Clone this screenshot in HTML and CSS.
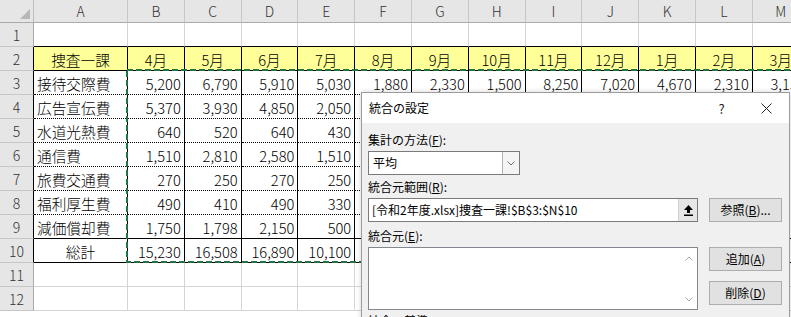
FILE: index.html
```html
<!DOCTYPE html>
<html lang="ja">
<head>
<meta charset="utf-8">
<title>統合の設定</title>
<link rel="stylesheet" href="styles.css">
</head>
<body>
<div class="sheet">
  <div class="grid">
    <div class="corner"><svg width="10" height="10" viewBox="0 0 10 10"><path d="M10 0V10H0Z" fill="#b7b7b7"/></svg></div>
    <div class="ch">A</div><div class="ch">B</div><div class="ch">C</div><div class="ch">D</div><div class="ch">E</div><div class="ch">F</div><div class="ch">G</div><div class="ch">H</div><div class="ch">I</div><div class="ch">J</div><div class="ch">K</div><div class="ch">L</div><div class="ch">M</div>

    <div class="rh">1</div>
    <div class="tb"></div><div class="tb"></div><div class="tb"></div><div class="tb"></div><div class="tb"></div><div class="tb"></div><div class="tb"></div><div class="tb"></div><div class="tb"></div><div class="tb"></div><div class="tb"></div><div class="tb"></div><div class="tb"></div>

    <div class="rh rb">2</div>
    <div class="y t tb ctr">捜査一課</div><div class="y t tb ctr">4月</div><div class="y t tb ctr">5月</div><div class="y t tb ctr">6月</div><div class="y t tb ctr">7月</div><div class="y t tb ctr">8月</div><div class="y t tb ctr">9月</div><div class="y t tb ctr">10月</div><div class="y t tb ctr">11月</div><div class="y t tb ctr">12月</div><div class="y t tb ctr">1月</div><div class="y t tb ctr">2月</div><div class="y t tb ctr">3月</div>

    <div class="rh rb">3</div>
    <div class="t td">接待交際費</div><div class="t td n">5,200</div><div class="t td n">6,790</div><div class="t td n">5,910</div><div class="t td n">5,030</div><div class="t td n">1,880</div><div class="t td n">2,330</div><div class="t td n">1,500</div><div class="t td n">8,250</div><div class="t td n">7,020</div><div class="t td n">4,670</div><div class="t td n">2,310</div><div class="t td n">3,150</div>

    <div class="rh rb">4</div>
    <div class="t td">広告宣伝費</div><div class="t td n">5,370</div><div class="t td n">3,930</div><div class="t td n">4,850</div><div class="t td n">2,050</div><div class="t td"></div><div class="t td"></div><div class="t td"></div><div class="t td"></div><div class="t td"></div><div class="t td"></div><div class="t td"></div><div class="t td"></div>

    <div class="rh rb">5</div>
    <div class="t td">水道光熱費</div><div class="t td n">640</div><div class="t td n">520</div><div class="t td n">640</div><div class="t td n">430</div><div class="t td"></div><div class="t td"></div><div class="t td"></div><div class="t td"></div><div class="t td"></div><div class="t td"></div><div class="t td"></div><div class="t td"></div>

    <div class="rh rb">6</div>
    <div class="t td">通信費</div><div class="t td n">1,510</div><div class="t td n">2,810</div><div class="t td n">2,580</div><div class="t td n">1,510</div><div class="t td"></div><div class="t td"></div><div class="t td"></div><div class="t td"></div><div class="t td"></div><div class="t td"></div><div class="t td"></div><div class="t td"></div>

    <div class="rh rb">7</div>
    <div class="t td">旅費交通費</div><div class="t td n">270</div><div class="t td n">250</div><div class="t td n">270</div><div class="t td n">250</div><div class="t td"></div><div class="t td"></div><div class="t td"></div><div class="t td"></div><div class="t td"></div><div class="t td"></div><div class="t td"></div><div class="t td"></div>

    <div class="rh rb">8</div>
    <div class="t td">福利厚生費</div><div class="t td n">490</div><div class="t td n">410</div><div class="t td n">490</div><div class="t td n">330</div><div class="t td"></div><div class="t td"></div><div class="t td"></div><div class="t td"></div><div class="t td"></div><div class="t td"></div><div class="t td"></div><div class="t td"></div>

    <div class="rh rb">9</div>
    <div class="t tb">減価償却費</div><div class="t tb n">1,750</div><div class="t tb n">1,798</div><div class="t tb n">2,150</div><div class="t tb n">500</div><div class="t tb"></div><div class="t tb"></div><div class="t tb"></div><div class="t tb"></div><div class="t tb"></div><div class="t tb"></div><div class="t tb"></div><div class="t tb"></div>

    <div class="rh rb">10</div>
    <div class="t tb ctr">総計</div><div class="t tb n">15,230</div><div class="t tb n">16,508</div><div class="t tb n">16,890</div><div class="t tb n">10,100</div><div class="t tb"></div><div class="t tb"></div><div class="t tb"></div><div class="t tb"></div><div class="t tb"></div><div class="t tb"></div><div class="t tb"></div><div class="t tb"></div>

    <div class="rh">11</div>
    <div></div><div></div><div></div><div></div><div></div><div></div><div></div><div></div><div></div><div></div><div></div><div></div><div></div>

    <div class="rh">12</div>
    <div></div><div></div><div></div><div></div><div></div><div></div><div></div><div></div><div></div><div></div><div></div><div></div><div></div>
  </div>

  <svg class="ants" width="700" height="194" viewBox="0 0 700 194">
    <rect x="1" y="1" width="698" height="192" fill="none" stroke="#217346" stroke-width="2" stroke-dasharray="6 3"/>
  </svg>

  <div class="dialog">
    <div class="titlebar">
      <span class="title">統合の設定</span>
      <span class="tbtn">?</span>
      <span class="tbtn"><svg width="11" height="11" viewBox="0 0 11 11"><path d="M0.5 0.5L10.5 10.5M10.5 0.5L0.5 10.5" stroke="#222" stroke-width="1" fill="none"/></svg></span>
    </div>
    <div class="dbody">
      <div class="label l1">集計の方法(<u>F</u>):</div>
      <div class="select">
        <span class="seltext">平均</span>
        <span class="drop"><svg width="8" height="5" viewBox="0 0 8 5"><path d="M0.5 0.5L4 4L7.5 0.5" stroke="#707070" fill="none"/></svg></span>
      </div>
      <div class="label l2">統合元範囲(<u>R</u>):</div>
      <div class="row r1">
        <div class="input">
          <span class="intext">[令和2年度.xlsx]捜査一課!$B$3:$N$10</span>
          <span class="refbtn"><svg width="9" height="11" viewBox="0 0 9 11"><path d="M4.5 0L9 5H6V8H3V5H0Z" fill="#000"/><rect x="0" y="9.5" width="9" height="1.5" fill="#000"/></svg></span>
        </div>
        <div class="btn">参照(<u>B</u>)...</div>
      </div>
      <div class="label l3">統合元(<u>E</u>):</div>
      <div class="row r2">
        <div class="list">
          <div class="scroll">
            <svg width="8" height="5" viewBox="0 0 8 5"><path d="M0.5 4.5L4 1L7.5 4.5" stroke="#a6a6a6" fill="none"/></svg>
            <svg width="8" height="5" viewBox="0 0 8 5"><path d="M0.5 0.5L4 4L7.5 0.5" stroke="#a6a6a6" fill="none"/></svg>
          </div>
        </div>
        <div class="btns">
          <div class="btn">追加(<u>A</u>)</div>
          <div class="btn">削除(<u>D</u>)</div>
        </div>
      </div>
      <div class="label l4">統合の基準</div>
    </div>
  </div>
</div>
</body>
</html>
```

FILE: styles.css
```css
html, body {
  margin: 0;
  padding: 0;
  background: #fff;
}
body {
  width: 791px;
  height: 317px;
  overflow: hidden;
  font-family: "Noto Sans CJK JP", "Noto Sans", sans-serif;
}
.sheet {
  position: relative;
  width: 791px;
  height: 317px;
  overflow: hidden;
}
.grid {
  display: grid;
  grid-template-columns: 34px 94px repeat(12, 56.8px);
  grid-template-rows: 23px repeat(12, 24px);
  width: max-content;
}
.grid > div {
  box-sizing: border-box;
  border-right: 1px solid #d4d4d4;
  border-bottom: 1px solid #d4d4d4;
  display: flex;
  align-items: flex-end;
  padding: 0 3px 1px 3px;
  font-size: 14.67px;
  font-weight: 300;
  line-height: 19px;
  white-space: nowrap;
  overflow: hidden;
  color: #000;
}
.grid > .corner {
  background: #e6e6e6;
  border-right-color: #bdbdbd;
  border-bottom-color: #ababab;
  justify-content: flex-end;
  padding: 0 3px 3px 0;
}
.grid > .ch {
  background: #e6e6e6;
  border-right-color: #c6c6c6;
  border-bottom-color: #ababab;
  justify-content: center;
  align-items: center;
  padding: 1px 0 0 0;
  font-size: 14px;
  color: #333;
}
.grid > .rh {
  background: #e6e6e6;
  border-right-color: #ababab;
  border-bottom-color: #c6c6c6;
  justify-content: center;
  padding: 0 0 1px 0;
  font-size: 14px;
  color: #333;
}
.grid > .rb {
  border-right-color: #000;
}
.grid > .t {
  border-right: 1px solid #000;
}
.grid > .tb {
  border-bottom: 1px solid #000;
}
.grid > .td {
  border-bottom: 1px dotted #000;
}
.grid > .y {
  background: #ffff99;
}
.grid > .ctr {
  justify-content: center;
}
.grid > .n {
  justify-content: flex-end;
  padding-right: 3px;
}

.ants {
  position: absolute;
  left: 126px;
  top: 69px;
}

.dialog {
  position: absolute;
  left: 361px;
  top: 92px;
  width: 429px;
  height: 240px;
  box-sizing: border-box;
  border: 1px solid #9d9d9d;
  background: #f0f0f0;
  box-shadow: 0 0 5px rgba(0, 0, 0, 0.18);
  font-size: 12px;
  color: #000;
}
.titlebar {
  height: 30px;
  background: #fff;
  display: flex;
  align-items: center;
  padding-left: 7px;
}
.title {
  flex: 1;
  line-height: 16px;
}
.tbtn {
  width: 45px;
  height: 30px;
  display: flex;
  align-items: center;
  justify-content: center;
  font-size: 13px;
  color: #222;
}
.dbody {
  padding-left: 6px;
}
.label {
  line-height: 16px;
  height: 16px;
}
.label u, .btn u {
  text-underline-offset: 1px;
}
.l1 { margin-top: 9px; }
.l2 { margin-top: 4px; }
.l3 { margin-top: 6px; }
.l4 { margin-top: 3px; }

.select {
  margin-top: 3px;
  width: 152px;
  height: 24px;
  box-sizing: border-box;
  border: 1px solid #7a7a7a;
  background: #fff;
  display: flex;
  align-items: center;
}
.seltext {
  flex: 1;
  padding-left: 4px;
  line-height: 16px;
}
.drop {
  width: 17px;
  height: 22px;
  box-sizing: border-box;
  border-left: 1px solid #b4b4b4;
  background: #f4f4f4;
  display: flex;
  align-items: center;
  justify-content: center;
}

.row {
  display: flex;
  align-items: flex-start;
}
.r1 { margin-top: 3px; }
.r2 { margin-top: 3px; }

.input {
  width: 330px;
  height: 24px;
  box-sizing: border-box;
  border: 1px solid #7a7a7a;
  background: #fff;
  display: flex;
  align-items: center;
}
.intext {
  flex: 1;
  padding-left: 3px;
  line-height: 16px;
  white-space: nowrap;
}
.refbtn {
  width: 19px;
  height: 22px;
  box-sizing: border-box;
  border-left: 1px solid #cfcfcf;
  background: #e6e6e6;
  display: flex;
  align-items: center;
  justify-content: center;
}

.btn {
  margin-left: 11px;
  width: 73px;
  height: 24px;
  box-sizing: border-box;
  border: 1px solid #adadad;
  background: #e1e1e1;
  display: flex;
  align-items: center;
  justify-content: center;
  line-height: 16px;
}

.list {
  width: 330px;
  height: 63px;
  box-sizing: border-box;
  border: 1px solid #828790;
  background: #fff;
  display: flex;
  justify-content: flex-end;
}
.scroll {
  width: 17px;
  display: flex;
  flex-direction: column;
  justify-content: space-between;
  align-items: center;
  padding: 8px 0 7px;
}
.btns {
  display: flex;
  flex-direction: column;
  gap: 10px;
}
```
